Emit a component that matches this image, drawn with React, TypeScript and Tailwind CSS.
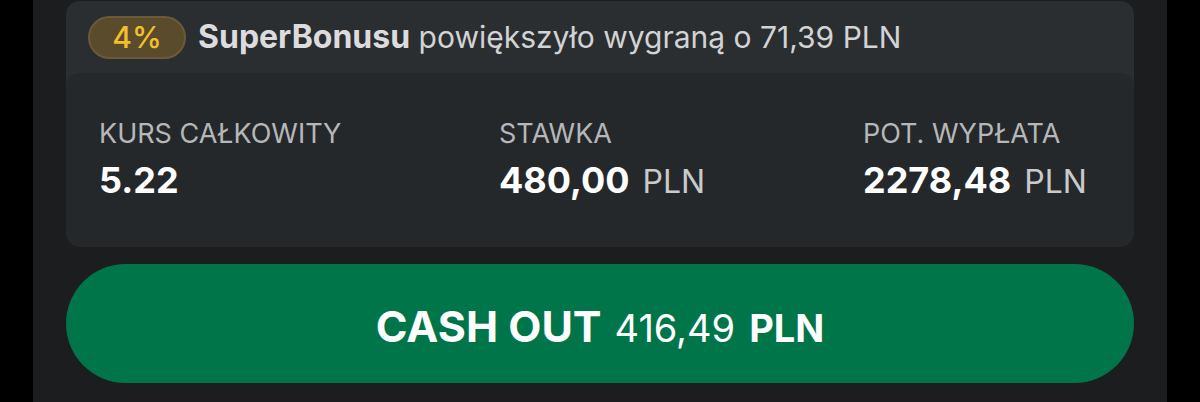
import React from "react";

export default function App() {
  const font = { fontFamily: "Inter, 'Noto Sans', sans-serif" };
  return (
    <div className="w-full h-[402px] bg-black px-[33px] overflow-hidden" style={font}>
      <div className="h-full bg-[#1c1d1f] px-[33px] pt-[1px]">
        <div className="rounded-[14px] bg-[#2b2e31] overflow-hidden">
          <div className="h-[72px] flex items-center pl-[22px] gap-[12px]">
            <div className="h-[43px] w-[98px] rounded-full bg-[#5a4b2c] border-2 border-[#6a5a3a] flex items-center justify-center text-[#f4bf2c] text-[30px] font-medium leading-none">
              4%
            </div>
            <div className="text-[30px] leading-none text-[#d2d3d5] whitespace-nowrap">
              <span className="font-bold text-[32px] text-[#dcdcde]">SuperBonusu</span> powiększyło wygraną o 71,39 PLN
            </div>
          </div>
          <div className="h-[174px] rounded-[14px] bg-[#25282b] pl-[33px] pt-[45px] grid grid-cols-[400px_364px_1fr]">
            <div className="flex flex-col gap-[9px]">
              <div className="text-[27px] leading-[1.2] text-[#b6b7b9]">KURS CAŁKOWITY</div>
              <div className="text-[36px] leading-[1.2] font-bold text-white">5.22</div>
            </div>
            <div className="flex flex-col gap-[9px]">
              <div className="text-[27px] leading-[1.2] text-[#b6b7b9]">STAWKA</div>
              <div className="text-[36px] leading-[1.2] font-bold text-white whitespace-nowrap">
                480,00<span className="ml-[13px] text-[32px] font-normal text-[#c9cacc]">PLN</span>
              </div>
            </div>
            <div className="flex flex-col gap-[9px]">
              <div className="text-[27px] leading-[1.2] text-[#b6b7b9]">POT. WYPŁATA</div>
              <div className="text-[36px] leading-[1.2] font-bold text-white whitespace-nowrap">
                2278,48<span className="ml-[13px] text-[32px] font-normal text-[#c9cacc]">PLN</span>
              </div>
            </div>
          </div>
        </div>
        <div className="mt-[17px] h-[119px] rounded-full bg-[#00754a] flex items-baseline justify-center text-white leading-none pt-[41px]">
          <span className="font-bold text-[43px]">CASH OUT</span>
          <span className="ml-[13px] font-normal text-[38px]">416,49</span>
          <span className="ml-[14px] font-bold text-[38px]">PLN</span>
        </div>
      </div>
    </div>
  );
}
